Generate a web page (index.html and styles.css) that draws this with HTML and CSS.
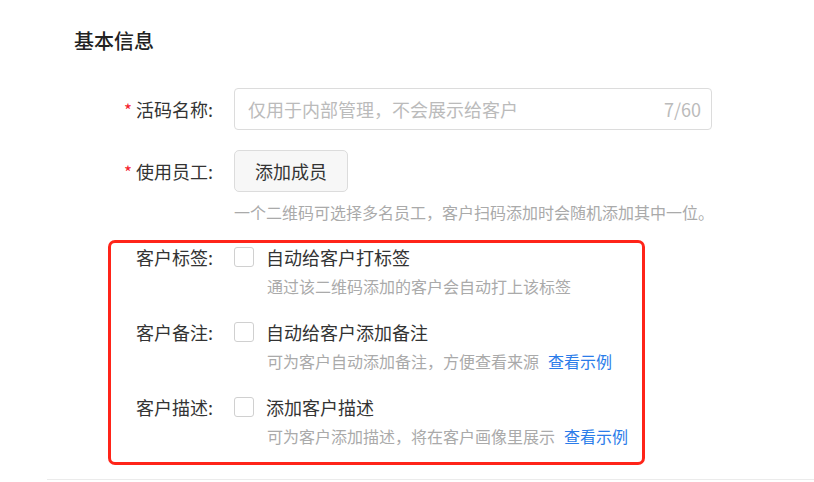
FILE: index.html
```html
<!DOCTYPE html>
<html lang="zh-CN">

<head>
    <meta charset="UTF-8">
    <meta name="viewport" content="width=device-width, initial-scale=1.0">
    <title>基本信息</title>
    <link rel="stylesheet" href="styles.css">
</head>

<body>
    <div class="page">
        <h2 class="title">基本信息</h2>

        <!-- name of the qr code -->
        <div class="row">
            <label class="label"><span class="required">*</span>活码名称:</label>
            <div class="input">
                <span class="placeholder">仅用于内部管理，不会展示给客户</span>
                <span class="count">7/60</span>
            </div>
        </div>

        <!-- staff -->
        <div class="row row-staff">
            <label class="label"><span class="required">*</span>使用员工:</label>
            <button class="btn" type="button">添加成员</button>
        </div>
        <p class="hint hint-staff">一个二维码可选择多名员工，客户扫码添加时会随机添加其中一位。</p>

        <!-- customer options -->
        <div class="group">
            <div class="item">
                <div class="row row-check">
                    <label class="label">客户标签:</label>
                    <span class="checkbox"></span>
                    <span class="check-text">自动给客户打标签</span>
                </div>
                <p class="hint">通过该二维码添加的客户会自动打上该标签</p>
            </div>
            <div class="item">
                <div class="row row-check">
                    <label class="label">客户备注:</label>
                    <span class="checkbox"></span>
                    <span class="check-text">自动给客户添加备注</span>
                </div>
                <p class="hint">可为客户自动添加备注，方便查看来源<a href="#" class="link">查看示例</a></p>
            </div>
            <div class="item">
                <div class="row row-check">
                    <label class="label">客户描述:</label>
                    <span class="checkbox"></span>
                    <span class="check-text">添加客户描述</span>
                </div>
                <p class="hint">可为客户添加描述，将在客户画像里展示<a href="#" class="link">查看示例</a></p>
            </div>
        </div>

        <div class="divider"></div>
    </div>
</body>

</html>
```

FILE: styles.css
```css
body {
    margin: 0;
    background: #fff;
    color: #333;
    font-family: "Noto Sans CJK SC", "Noto Sans", sans-serif;
    font-size: 18px;
}

.page {
    padding-top: 27px;
}

.title {
    margin: 0 0 33px 74px;
    font-size: 20px;
    line-height: 28px;
    font-weight: 500;
    color: #222;
}

.row {
    display: flex;
    align-items: center;
}

.label {
    width: 234px;
    box-sizing: border-box;
    padding-right: 21px;
    text-align: right;
    flex-shrink: 0;
    line-height: 28px;
}

.required {
    color: #f5222d;
    font-size: 17px;
    margin-right: 4px;
}

.input {
    width: 478px;
    height: 42px;
    box-sizing: border-box;
    border: 1px solid #dcdcdc;
    border-radius: 4px;
    display: flex;
    align-items: center;
    justify-content: space-between;
    padding: 0 10px 0 13px;
    color: #bbb;
}

.row-staff {
    margin-top: 20px;
}

.btn {
    height: 42px;
    padding: 0 20px;
    background: #f7f7f7;
    border: 1px solid #dcdcdc;
    border-radius: 5px;
    font-family: inherit;
    font-size: 18px;
    color: #333;
}

.hint {
    margin: 0;
    font-size: 16px;
    line-height: 22px;
    color: #aaa;
}

.hint-staff {
    margin: 9px 0 0 234px;
}

.group {
    margin: 17px 0 0 108px;
    width: 537px;
    box-sizing: border-box;
    border: 3px solid #ff2419;
    border-radius: 7px;
    padding-bottom: 15px;
}

.group .label {
    width: 123px;
}

.item + .item {
    margin-top: 21px;
}

.row-check {
    height: 28px;
}

.checkbox {
    width: 20px;
    height: 20px;
    box-sizing: border-box;
    border: 1px solid #d0d0d0;
    border-radius: 3px;
    background: #fff;
    margin-right: 12px;
}

.group .hint {
    margin: 4px 0 0 156px;
}

.link {
    color: #2b7ce9;
    text-decoration: none;
    margin-left: 9px;
}

.divider {
    margin: 14px 0 0 47px;
    height: 1px;
    background: #ebebeb;
}
```
